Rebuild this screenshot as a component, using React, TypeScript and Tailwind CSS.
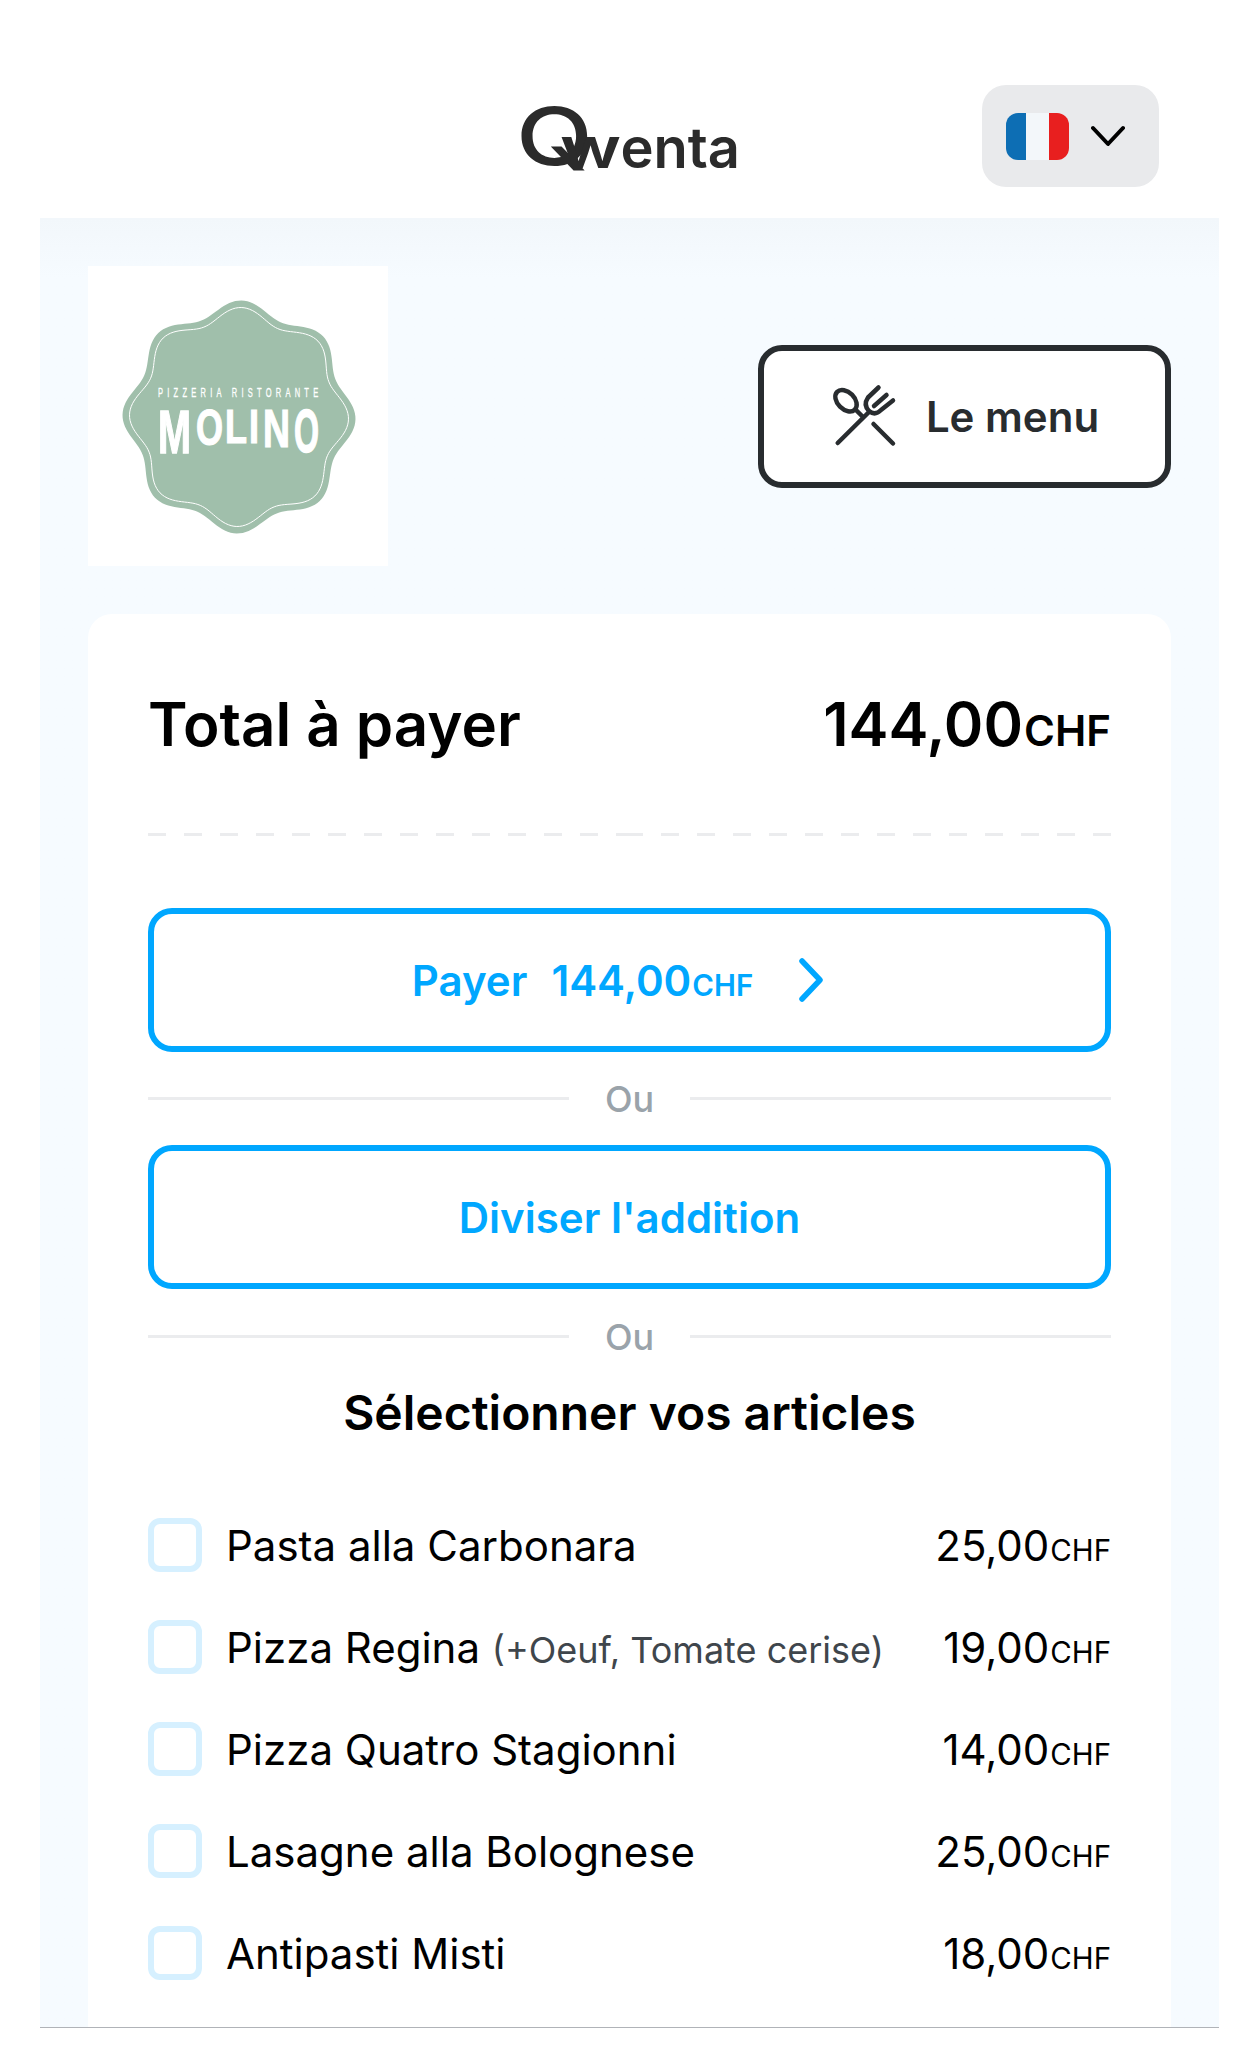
import { Fragment } from 'react';

const items = [
  { name: 'Pasta alla Carbonara', price: '25,00' },
  { name: 'Pizza Regina', extra: '(+Oeuf, Tomate cerise)', price: '19,00' },
  { name: 'Pizza Quatro Stagionni', price: '14,00' },
  { name: 'Lasagne alla Bolognese', price: '25,00' },
  { name: 'Antipasti Misti', price: '18,00' },
];

function wavyPath(cx: number, cy: number, r: number, amp: number) {
  const pts: string[] = [];
  for (let i = 0; i < 240; i++) {
    const t = (i / 240) * Math.PI * 2;
    const rad = r + amp * Math.cos(8 * t);
    const a = t - Math.PI / 2 + 0.02;
    pts.push(`${(cx + rad * Math.cos(a)).toFixed(2)} ${(cy + rad * Math.sin(a)).toFixed(2)}`);
  }
  return 'M' + pts.join('L') + 'Z';
}

function MolinoBadge() {
  const letters = [
    { c: 'M', x: 70, w: 33, sy: 1.18 },
    { c: 'O', x: 108, w: 27, sy: 0.97 },
    { c: 'L', x: 137, w: 22, sy: 0.91 },
    { c: 'I', x: 161, w: 10, sy: 0.91 },
    { c: 'N', x: 175, w: 27, sy: 1.02 },
    { c: 'O', x: 206, w: 25, sy: 1.16 },
  ];
  return (
    <svg viewBox="0 0 300 300" className="h-[300px] w-[300px]">
      <path d={wavyPath(151, 151, 110, 6.5)} fill="#a0bfab" />
      <path d={wavyPath(151, 151, 103, 6.5)} fill="none" stroke="#ffffff" strokeWidth="1" />
      <text
        transform="translate(70 131) scale(0.6 1)"
        fill="#ffffff"
        stroke="#ffffff"
        strokeWidth="0.3"
        fontFamily="Liberation Sans, sans-serif"
        fontSize="12.5"
        textLength="267"
        lengthAdjust="spacing"
      >
        PIZZERIA RISTORANTE
      </text>
      {letters.map((l, i) => (
        <text
          key={i}
          transform={`translate(${l.x} 143) scale(1 ${l.sy})`}
          y="37"
          fill="#ffffff"
          stroke="#ffffff"
          strokeWidth="1.2"
          fontFamily="Liberation Sans, sans-serif"
          fontSize="52"
          fontWeight="700"
          textLength={l.w}
          lengthAdjust="spacingAndGlyphs"
        >
          {l.c}
        </text>
      ))}
    </svg>
  );
}

function CutleryIcon() {
  return (
    <svg viewBox="0 0 80 75" className="h-[75px] w-[80px]" fill="none" stroke="#282c2f" strokeWidth="4.5" strokeLinecap="round" strokeLinejoin="round">
      <ellipse cx="21" cy="21.7" rx="12.5" ry="8.5" transform="rotate(45 21 21.7)" />
      <path d="M31 31 L38 38" />
      <path d="M48.5 45 L68 64.5" />
      <path d="M12.7 64 L44 33" />
      <path d="M53.5 8.5 L43 18.5 Q38 26 44 32 Q50 37 56 31 L68 21.5" />
      <path d="M61.5 16 L49 27" />
    </svg>
  );
}

function Flag() {
  return (
    <div className="flex h-[47px] w-[63px] overflow-hidden rounded-[12px]">
      <div className="w-[20px] bg-[#0d6eb4]" />
      <div className="w-[23px] bg-[#f3f7fa]" />
      <div className="w-[20px] bg-[#e81f1f]" />
    </div>
  );
}

function Amount({ value, size }: { value: string; size: string }) {
  return (
    <span className={size}>
      {value}
      <span className="ml-[1px] text-[0.7em]">CHF</span>
    </span>
  );
}

function Divider() {
  return (
    <div className="flex items-center gap-[36px]">
      <div className="h-[3px] flex-1 bg-[#ebecee]" />
      <span className="pt-[1px] text-[36px] leading-[44px] font-medium text-[#9aa3aa]">Ou</span>
      <div className="h-[3px] flex-1 bg-[#ebecee]" />
    </div>
  );
}

export default function App() {
  return (
    <div className="h-[2060px] w-[1260px] overflow-hidden bg-white font-['Inter',sans-serif]">
      <header className="relative flex h-[218px] justify-center">
        <div className="mt-[86px] flex h-[110px] w-[220px] items-start text-[#2b2b2b]">
          <span className="mt-[5px] ml-[-4px] inline-block w-[44px] origin-left scale-x-[1.25] text-[80px] leading-[90px] font-medium">Q</span>
          <span className="mt-[17px] inline-block w-[62px] origin-left scale-x-[1.3] text-[56px] leading-[90px] font-semibold">w</span>
          <span className="mt-[17px] text-[56px] leading-[90px] font-semibold">enta</span>
        </div>
        <button className="absolute top-[85px] left-[982px] flex h-[102px] w-[177px] items-center gap-[22px] rounded-[24px] bg-[#e9eaec] pl-[24px]">
          <Flag />
          <svg viewBox="0 0 34 22" className="h-[22px] w-[34px]" fill="none" stroke="#000000" strokeWidth="4" strokeLinecap="round" strokeLinejoin="round">
            <path d="M2 3 L17 19 L32 3" />
          </svg>
        </button>
      </header>

      <main className="mx-[40px] h-[1810px] w-[1179px] overflow-hidden border-b border-[#b0b3b8] bg-linear-to-b from-[#f2f7fb] to-[#f6fbff] to-[60px] px-[48px] pt-[48px]">
        <div className="flex items-center justify-between">
          <div className="flex h-[300px] w-[300px] items-center justify-center bg-white">
            <MolinoBadge />
          </div>
          <button className="flex h-[143px] w-[413px] items-center justify-center gap-[21px] rounded-[24px] border-[6px] border-[#282c2f] bg-white pr-[5px]">
            <CutleryIcon />
            <span className="text-[42px] font-semibold text-[#282c2f]">Le menu</span>
          </button>
        </div>

        <section className="mt-[48px] h-[1413px] w-full rounded-t-[24px] bg-white px-[60px] pt-[60px]">
          <div className="flex h-[100px] items-center justify-between text-black">
            <h1 className="text-[60px] font-semibold">Total à payer</h1>
            <Amount value="144,00" size="text-[60px] font-semibold" />
          </div>
          <div className="mt-[59px] flex">
            <div className="h-[3px] flex-1 bg-[repeating-linear-gradient(90deg,#ebecee_0_18px,transparent_18px_36px)]" />
            <div className="h-[3px] flex-1 bg-[repeating-linear-gradient(270deg,#ebecee_0_18px,transparent_18px_36px)]" />
          </div>

          <button className="mt-[72px] flex h-[144px] w-full items-center justify-center gap-[44px] rounded-[24px] border-[6px] border-[#00a7ff] pr-[22px] text-[#00a7ff]">
            <span className="flex gap-[24px] text-[42px] font-semibold">
              <span>Payer</span>
              <Amount value="144,00" size="" />
            </span>
            <svg viewBox="0 0 28 44" className="h-[44px] w-[28px]" fill="none" stroke="#00a7ff" strokeWidth="5.5" strokeLinecap="round" strokeLinejoin="round">
              <path d="M5 3 L23 22 L5 41" />
            </svg>
          </button>
          <div className="mt-[24px]">
            <Divider />
          </div>
          <button className="mt-[24px] flex h-[144px] w-full items-center justify-center rounded-[24px] border-[6px] border-[#00a7ff] text-[42px] font-semibold text-[#00a7ff]">
            Diviser l'addition
          </button>
          <div className="mt-[25px]">
            <Divider />
          </div>
          <h2 className="mt-[24px] text-center text-[48px] leading-[60px] font-semibold text-black">Sélectionner vos articles</h2>

          <ul className="mt-[75px] flex flex-col gap-[48px]">
            {items.map((item) => (
              <li key={item.name} className="flex h-[54px] items-center text-black">
                <span className="h-[54px] w-[54px] shrink-0 rounded-[12px] border-[6px] border-[#d6f0ff]" />
                <span className="ml-[24px] flex-1 text-[42px]">
                  {item.name}
                  {item.extra && (
                    <Fragment>
                      {' '}
                      <span className="text-[36px] text-[#3f464c]">{item.extra}</span>
                    </Fragment>
                  )}
                </span>
                <Amount value={item.price} size="text-[42px]" />
              </li>
            ))}
          </ul>
        </section>
      </main>
    </div>
  );
}
